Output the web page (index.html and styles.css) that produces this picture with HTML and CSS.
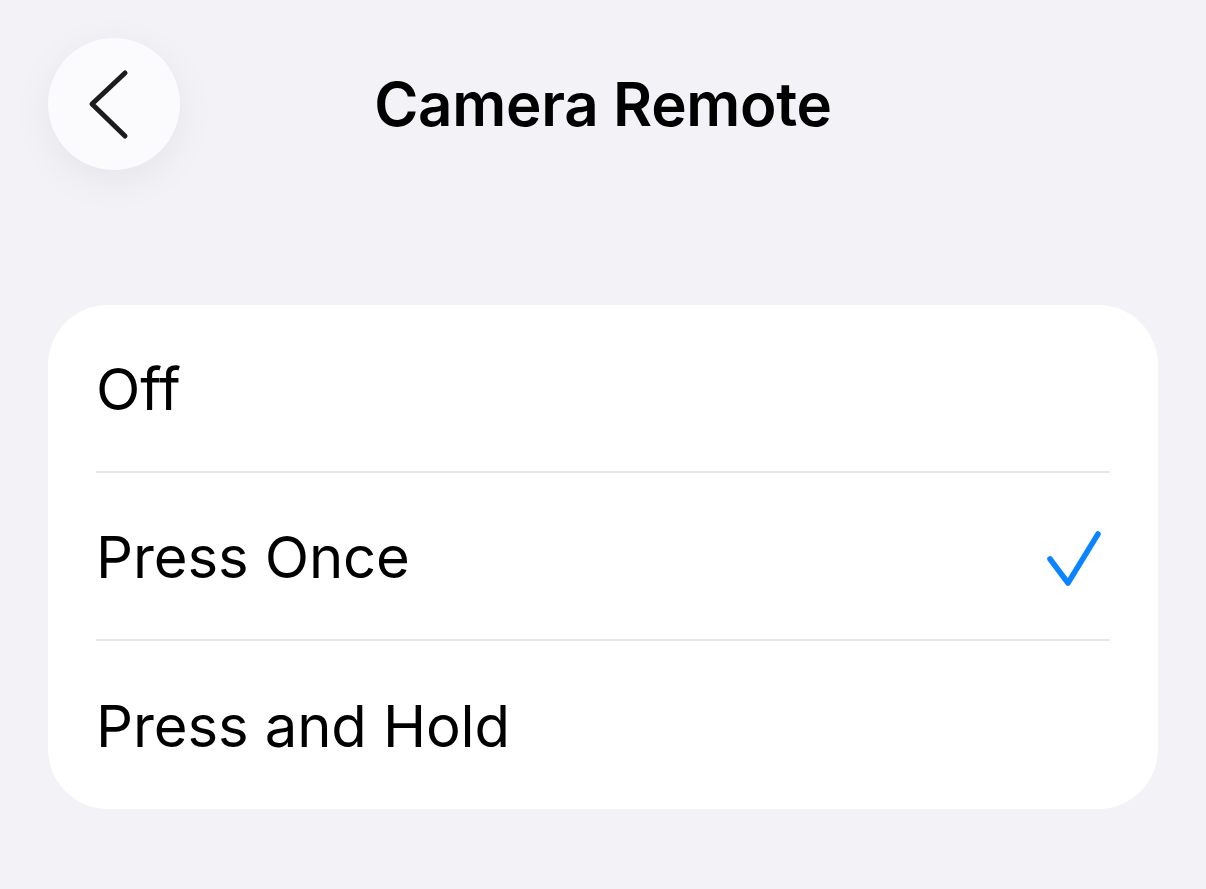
FILE: index.html
```html
<!DOCTYPE html>
<html lang="en">
<head>
<meta charset="utf-8">
<title>Camera Remote</title>
<link rel="stylesheet" href="styles.css">
</head>
<body>
<header class="nav">
  <button class="back" aria-label="Back">
    <svg width="132" height="132" viewBox="0 0 132 132">
      <path d="M77 35 L44 66 L77 98" fill="none" stroke="#1c1c1e" stroke-width="5" stroke-linecap="round" stroke-linejoin="round"/>
    </svg>
  </button>
  <h1 class="title">Camera Remote</h1>
  <div class="spacer"></div>
</header>
<main>
  <ul class="list">
    <li class="row"><span class="label">Off</span></li>
    <li class="row"><span class="label">Press Once</span>
      <svg class="check" width="70" height="70" viewBox="0 0 70 70">
        <path d="M10 38 L28 62 L58 13" fill="none" stroke="#0a84ff" stroke-width="5.5" stroke-linecap="round" stroke-linejoin="round"/>
      </svg>
    </li>
    <li class="row"><span class="label">Press and Hold</span></li>
  </ul>
</main>
</body>
</html>
```
FILE: styles.css
```css
html, body {
  margin: 0;
  padding: 0;
}
body {
  background: #f2f2f7;
  font-family: "Inter", "Noto Sans", sans-serif;
  color: #000;
  width: 1206px;
  height: 889px;
  overflow: hidden;
}
.nav {
  display: grid;
  grid-template-columns: 132px 1fr 132px;
  align-items: center;
  padding: 38px 48px 0;
  height: 132px;
}
.back {
  width: 132px;
  height: 132px;
  border-radius: 50%;
  border: none;
  padding: 0;
  margin: 0;
  background: #fbfbfd;
  box-shadow: 0 10px 40px rgba(0, 0, 0, 0.06);
  display: flex;
  align-items: center;
  justify-content: center;
}
.back svg {
  display: block;
}
.title {
  margin: 0;
  text-align: center;
  font-size: 60px;
  font-weight: 600;
  letter-spacing: -0.3px;
  line-height: 1;
}
.list {
  list-style: none;
  margin: 135px 48px 0;
  padding: 0;
  background: #fff;
  border-radius: 60px;
  overflow: hidden;
}
.row {
  display: flex;
  align-items: center;
  justify-content: space-between;
  height: 166px;
  margin: 0 48px;
  border-bottom: 2px solid #e5e5ea;
}
.row:last-child {
  border-bottom: none;
  height: 168px;
}
.label {
  font-size: 58px;
  font-weight: 400;
  letter-spacing: -0.1px;
  padding-top: 2px;
}
.check {
  display: block;
}
```
